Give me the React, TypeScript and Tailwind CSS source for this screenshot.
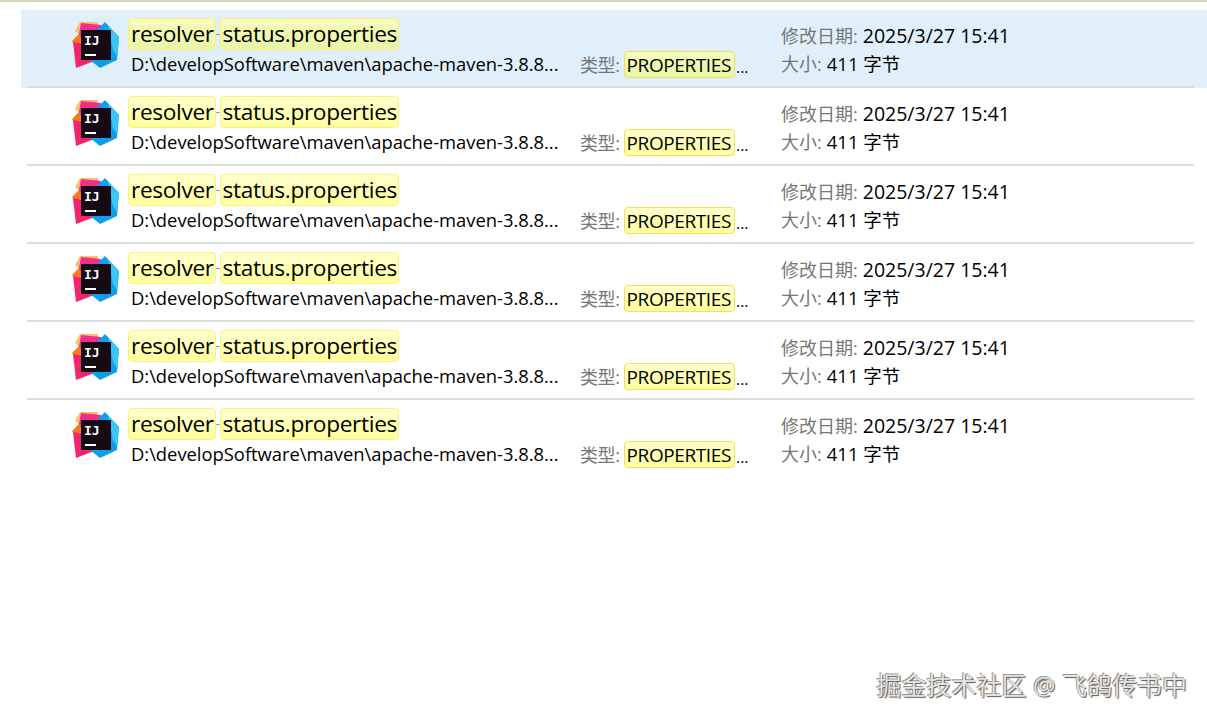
const sans = "font-['Open_Sans','Noto_Sans_CJK_SC',sans-serif]";

const IdeaIcon = () => (
  <svg width="50" height="50" viewBox="0 0 50 50" className="shrink-0">
    <polygon points="4,11 9,2 27,2 24,14 10,16" fill="#f9c26a" />
    <polygon points="1,21 10,12 22,26 9,34" fill="#fb7a1f" />
    <polygon points="10,3 30,5 34,22 18,30 8,14" fill="#ee2f8d" />
    <polygon points="2,22 11,24 26,40 5,48" fill="#f5226c" />
    <polygon points="34,2 48,17 46,40 29,48 19,40 24,12" fill="#0f9fea" />
    <polygon points="37,6 48,17 46,36 42,30" fill="#3cc6f6" />
    <rect x="10" y="10" width="30" height="30" fill="#140b14" />
    <text x="13" y="25" fill="#fff" fontSize="13" fontWeight="700" fontFamily="'DejaVu Sans Mono', monospace">IJ</text>
    <rect x="14" y="34" width="11" height="2" fill="#fff" />
  </svg>
);

const Mark = ({ children, big, selected }: { children: string; big?: boolean; selected?: boolean }) => {
  const fill = selected
    ? "from-[#f7fcbc] to-[#e9f5a6]"
    : "from-[#ffffcc] to-[#ffff9e]";
  return (
    <span
      className={
        big
          ? `inline-flex h-[32px] items-center rounded-[4px] border border-[#f6f37e] bg-gradient-to-b pl-[2px] pr-[1px] ${fill}`
          : `inline-flex h-[27px] items-center rounded-[4px] border border-[#efe060] bg-gradient-to-b pl-[2px] pr-[3px] ${fill}`
      }
    >
      {children}
    </span>
  );
};

const Row = ({ selected, last }: { selected?: boolean; last?: boolean }) => (
  <div className={selected ? "ml-[21px] bg-[#e1effb]" : "ml-[21px]"}>
    <div
      className={
        last
          ? "ml-[6px] mr-[13px] flex h-[78px] border-b-2 border-transparent pl-[44px] pt-[10px] text-black"
          : "ml-[6px] mr-[13px] flex h-[78px] border-b-2 border-[#dcdddd] pl-[44px] pt-[10px] text-black"
      }
    >
      <IdeaIcon />
      <div className="ml-[7px] flex w-[453px] shrink-0 flex-col">
        <div className="-mt-[2px] flex items-center text-[22.7px] tracking-[-0.35px]">
          <Mark big selected={selected}>resolver</Mark>
          <span className="text-[13px] text-[#888]">-</span>
          <Mark big selected={selected}>status.properties</Mark>
        </div>
        <div className="-mt-[1px] flex h-[29px] items-center">
          <span className="ml-[3px] whitespace-nowrap text-[18.4px] tracking-[-0.02px]">
            D:\developSoftware\maven\apache-maven-3.8.8...
          </span>
        </div>
      </div>
      <div className="flex w-[200px] shrink-0 items-end pb-[7px] text-[18px]">
        <span className="-ml-[1px] tracking-[-0.4px] text-[#777]">类型:</span>
        <span className="ml-[4px] text-[19px] tracking-[-0.4px]">
          <Mark selected={selected}>PROPERTIES</Mark>
        </span>
        <span className="ml-[1px] text-[16px]">...</span>
      </div>
      <div className="flex flex-col text-[18px]">
        <div className="flex h-[32px] items-center whitespace-nowrap">
          <span className="text-[#777]">修改日期:</span>
          <span className="ml-[5px] text-[19.5px]">2025/3/27 15:41</span>
        </div>
        <div className="flex h-[24px] items-center whitespace-nowrap">
          <span className="text-[#777]">大小:</span>
          <span className="ml-[5px] text-[18.5px]">411 字节</span>
        </div>
      </div>
    </div>
  </div>
);

export default function App() {
  return (
    <div className={`relative h-[718px] w-[1207px] overflow-hidden bg-white ${sans}`}>
      <div className="mb-[8px] h-[2px] bg-[#d6d9b4]" />
      {[0, 1, 2, 3, 4, 5].map((i) => (
        <Row key={i} selected={i === 0} last={i === 5} />
      ))}
      {/* watermark */}
      <div className="absolute right-[20px] top-[667px] whitespace-nowrap text-[25px] text-[#e4e4e4] [text-shadow:1px_1px_1px_#555,-1px_-1px_0_#999]">
        掘金技术社区 @ 飞鸽传书中
      </div>
    </div>
  );
}
